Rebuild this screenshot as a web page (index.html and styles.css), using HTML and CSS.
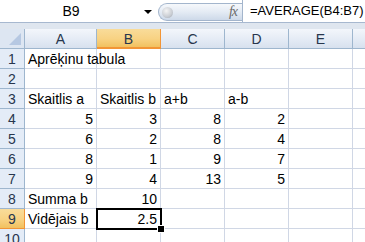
FILE: index.html
```html
<!DOCTYPE html>
<html lang="lv">
<head>
    <meta charset="UTF-8">
    <title>Aprēķinu tabula</title>
    <link rel="stylesheet" href="styles.css">
</head>
<body>
    <div class="toolbar">
        <div class="name-box">
            <span class="name-text">B9</span>
            <span class="name-arrow"></span>
        </div>
        <div class="fx-pill">
            <span class="fx-knob"></span>
            <span class="fx-label">fx</span>
        </div>
        <div class="formula-input">=AVERAGE(B4:B7)</div>
    </div>
    <div class="strip"></div>

    <div class="sheet">
        <!-- column headers -->
        <div class="hdr corner"><span class="corner-tri"></span></div>
        <div class="hdr col">A</div>
        <div class="hdr col active">B</div>
        <div class="hdr col">C</div>
        <div class="hdr col">D</div>
        <div class="hdr col">E</div>
        <div class="hdr col"></div>

        <div class="hdr row">1</div>
        <div class="cell">Aprēķinu tabula</div>
        <div class="cell"></div><div class="cell"></div><div class="cell"></div><div class="cell"></div><div class="cell"></div>

        <div class="hdr row">2</div>
        <div class="cell"></div><div class="cell"></div><div class="cell"></div><div class="cell"></div><div class="cell"></div><div class="cell"></div>

        <div class="hdr row">3</div>
        <div class="cell">Skaitlis a</div>
        <div class="cell">Skaitlis b</div>
        <div class="cell">a+b</div>
        <div class="cell">a-b</div>
        <div class="cell"></div><div class="cell"></div>

        <div class="hdr row">4</div>
        <div class="cell num">5</div><div class="cell num">3</div><div class="cell num">8</div><div class="cell num">2</div>
        <div class="cell"></div><div class="cell"></div>

        <div class="hdr row">5</div>
        <div class="cell num">6</div><div class="cell num">2</div><div class="cell num">8</div><div class="cell num">4</div>
        <div class="cell"></div><div class="cell"></div>

        <div class="hdr row">6</div>
        <div class="cell num">8</div><div class="cell num">1</div><div class="cell num">9</div><div class="cell num">7</div>
        <div class="cell"></div><div class="cell"></div>

        <div class="hdr row">7</div>
        <div class="cell num">9</div><div class="cell num">4</div><div class="cell num">13</div><div class="cell num">5</div>
        <div class="cell"></div><div class="cell"></div>

        <div class="hdr row">8</div>
        <div class="cell">Summa b</div>
        <div class="cell num">10</div>
        <div class="cell"></div><div class="cell"></div><div class="cell"></div><div class="cell"></div>

        <div class="hdr row active">9</div>
        <div class="cell">Vidējais b</div>
        <div class="cell num selected">2.5</div>
        <div class="cell"></div><div class="cell"></div><div class="cell"></div><div class="cell"></div>

        <div class="hdr row">10</div>
        <div class="cell"></div><div class="cell"></div><div class="cell"></div><div class="cell"></div><div class="cell"></div><div class="cell"></div>
    </div>
</body>
</html>
```

FILE: styles.css
```css
* {
    margin: 0;
    padding: 0;
    box-sizing: border-box;
}

body {
    width: 365px;
    height: 242px;
    overflow: hidden;
    background: #ffffff;
    font-family: "Liberation Sans", Arial, sans-serif;
    color: #000;
}

/* formula bar */
.toolbar {
    display: flex;
    height: 23px;
    background: #ffffff;
    border-bottom: 1px solid #a7b8cf;
}

.name-box {
    width: 158px;
    display: flex;
    align-items: center;
}

.name-text {
    width: 140px;
    text-align: center;
    font-size: 14px;
    padding-left: 2px;
}

.name-arrow {
    width: 0;
    height: 0;
    border-left: 4px solid transparent;
    border-right: 4px solid transparent;
    border-top: 4px solid #000;
    margin-left: 4px;
    margin-top: 1px;
}

.fx-pill {
    width: 84px;
    margin-top: 3px;
    height: 18px;
    border: 1px solid #a3b5cc;
    border-right: none;
    border-radius: 9px 0 0 9px;
    background: linear-gradient(#f6f8fb 0%, #e4ebf4 50%, #cdd9e9 100%);
    display: flex;
    align-items: center;
    justify-content: space-between;
    padding: 0 5px 0 3px;
}

.fx-knob {
    width: 11px;
    height: 11px;
    border-radius: 50%;
    background: radial-gradient(circle at 40% 35%, #f4f4f4 0%, #c9cdd3 60%, #9aa1aa 100%);
}

.fx-label {
    font-family: "Liberation Serif", serif;
    font-style: italic;
    font-size: 14px;
    color: #6b6b6b;
    letter-spacing: -1px;
}

.formula-input {
    flex: 1;
    border-left: 1px solid #a3b5cc;
    padding-left: 7px;
    font-size: 13px;
    line-height: 22px;
    white-space: nowrap;
}

.strip {
    height: 6px;
    background: #dfe6ef;
}

/* sheet grid */
.sheet {
    display: grid;
    grid-template-columns: 25px 72px 64px 64px 64px 64px 64px;
    grid-auto-rows: 20px;
}

.cell {
    border-right: 1px solid #d0d7e5;
    border-bottom: 1px solid #d0d7e5;
    font-size: 14px;
    line-height: 19px;
    padding: 1px 3px 0;
    white-space: nowrap;
}

.cell.num {
    text-align: right;
}

.cell.selected {
    position: relative;
}

.cell.selected::after {
    content: "";
    position: absolute;
    left: -1px;
    top: -1px;
    right: -2px;
    bottom: -2px;
    border: 2px solid #000;
}

.cell.selected::before {
    content: "";
    position: absolute;
    right: -5px;
    bottom: -5px;
    width: 6px;
    height: 6px;
    background: #000;
    border: 1px solid #fff;
    z-index: 2;
}

.hdr {
    font-size: 14px;
    line-height: 19px;
    padding-top: 1px;
    text-align: center;
    color: #27364d;
    border-right: 1px solid #9eb6ce;
    border-bottom: 1px solid #9eb6ce;
}

.hdr.col {
    background: linear-gradient(#f3f6fb 0%, #e4ebf5 55%, #d7e1ee 100%);
}

.hdr.row {
    background: #e4ecf7;
}

.hdr.active {
    background: linear-gradient(#f9dc9a 0%, #f8d283 55%, #f1c15f 100%);
    border-color: #f29536;
}

.hdr.col.active {
    border-bottom: 2px solid #f29536;
    line-height: 18px;
}

.hdr.corner {
    background: #dde6f2;
    position: relative;
}

.corner-tri {
    position: absolute;
    right: 3px;
    bottom: 3px;
    width: 0;
    height: 0;
    border-left: 12px solid transparent;
    border-bottom: 12px solid #b6c8e2;
}
```
